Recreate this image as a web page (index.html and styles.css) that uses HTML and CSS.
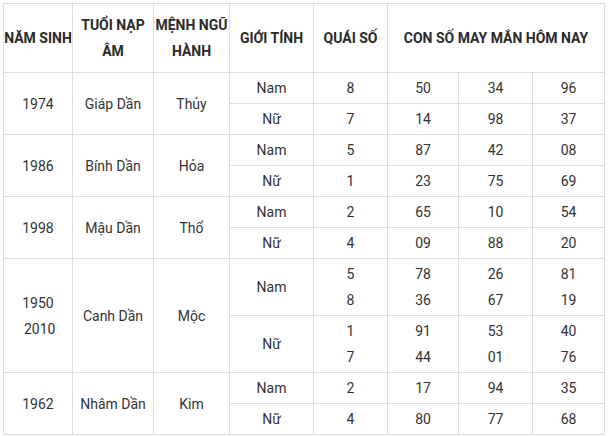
FILE: index.html
```html
<!DOCTYPE html>
<html lang="vi">
<head>
<meta charset="utf-8">
<title>Con số may mắn</title>
<link rel="stylesheet" href="styles.css">
</head>
<body>
<div class="wrap">
<table class="lucky">
  <colgroup>
    <col class="c1"><col class="c2"><col class="c3"><col class="c4">
    <col class="c5"><col class="c6"><col class="c7"><col class="c8">
  </colgroup>
  <thead>
    <tr>
      <th class="nowrap">NĂM SINH</th>
      <th>TUỔI NẠP<br>ÂM</th>
      <th>MỆNH NGŨ<br>HÀNH</th>
      <th class="nowrap">GIỚI TÍNH</th>
      <th class="nowrap">QUÁI SỐ</th>
      <th colspan="3" class="nowrap">CON SỐ MAY MẮN HÔM NAY</th>
    </tr>
  </thead>
  <tbody>
    <tr><td rowspan="2">1974</td><td rowspan="2">Giáp Dần</td><td rowspan="2">Thủy</td><td>Nam</td><td>8</td><td>50</td><td>34</td><td>96</td></tr>
    <tr><td>Nữ</td><td>7</td><td>14</td><td>98</td><td>37</td></tr>
    <tr><td rowspan="2">1986</td><td rowspan="2">Bính Dần</td><td rowspan="2">Hỏa</td><td>Nam</td><td>5</td><td>87</td><td>42</td><td>08</td></tr>
    <tr><td>Nữ</td><td>1</td><td>23</td><td>75</td><td>69</td></tr>
    <tr><td rowspan="2">1998</td><td rowspan="2">Mậu Dần</td><td rowspan="2">Thổ</td><td>Nam</td><td>2</td><td>65</td><td>10</td><td>54</td></tr>
    <tr><td>Nữ</td><td>4</td><td>09</td><td>88</td><td>20</td></tr>
    <tr><td rowspan="2">1950<br>&nbsp;2010</td><td rowspan="2">Canh Dần</td><td rowspan="2">Mộc</td><td>Nam</td><td>5<br>8</td><td>78<br>36</td><td>26<br>67</td><td>81<br>19</td></tr>
    <tr><td>Nữ</td><td>1<br>7</td><td>91<br>44</td><td>53<br>01</td><td>40<br>76</td></tr>
    <tr><td rowspan="2">1962</td><td rowspan="2">Nhâm Dần</td><td rowspan="2">Kim</td><td>Nam</td><td>2</td><td>17</td><td>94</td><td>35</td></tr>
    <tr><td>Nữ</td><td>4</td><td>80</td><td>77</td><td>68</td></tr>
  </tbody>
</table>
</div>
</body>
</html>
```

FILE: styles.css
```css
html, body {
  margin: 0;
  padding: 0;
  background: #ffffff;
}
.wrap {
  padding: 3px 0 0 3px;
}
.lucky {
  border-collapse: collapse;
  table-layout: fixed;
  width: 602px;
  font-family: Roboto, "Liberation Sans", Arial, sans-serif;
  font-size: 14px;
  color: #333333;
}
.c1 { width: 69px; }
.c2 { width: 81px; }
.c3 { width: 76px; }
.c4 { width: 84px; }
.c5 { width: 74px; }
.c6 { width: 71px; }
.c7 { width: 74px; }
.c8 { width: 72px; }
.lucky th,
.lucky td {
  border: 1px solid #dddddd;
  text-align: center;
  vertical-align: middle;
  line-height: 26px;
}
.lucky th {
  padding: 8px 0;
  font-weight: 700;
  color: #2a2a2a;
}
.lucky th.nowrap {
  white-space: nowrap;
}
.lucky td {
  padding: 2px 2px;
  font-weight: 400;
}
```
